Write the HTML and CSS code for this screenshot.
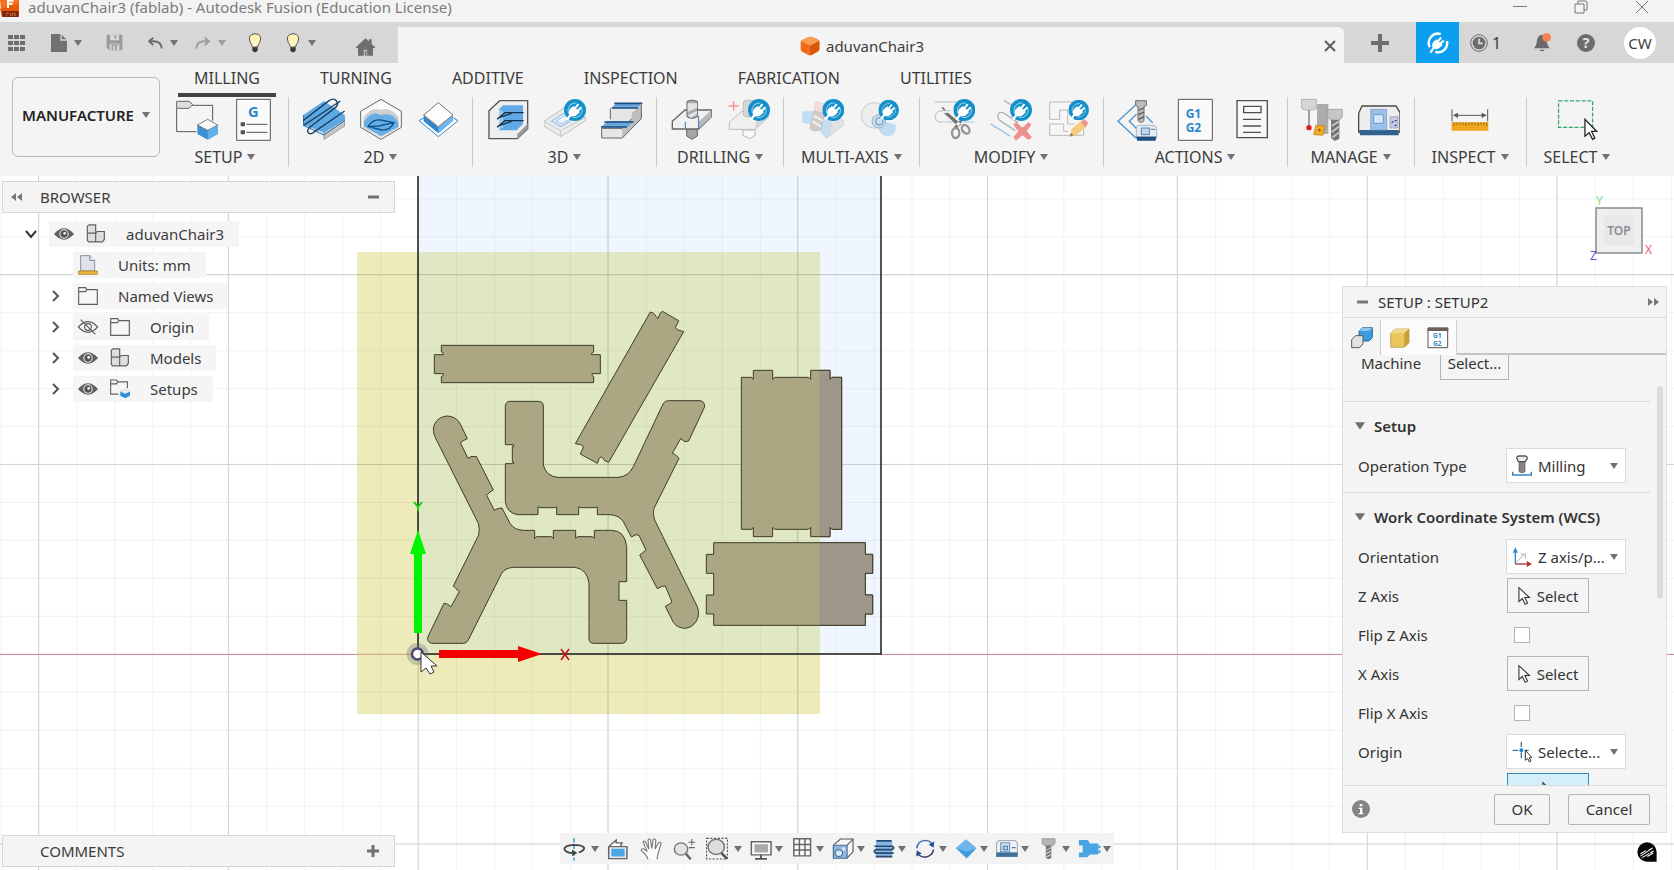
FILE: index.html
```
<!DOCTYPE html>
<html lang="en">
<head>
<meta charset="utf-8">
<title>aduvanChair3 (fablab) - Autodesk Fusion (Education License)</title>
<link rel="stylesheet" href="styles.css">
</head>
<body>
<svg class="defs" aria-hidden="true">
  <defs>
    <symbol id="caret" viewBox="0 0 8 6"><path d="M0 0H8L4 6Z" fill="#717171"/></symbol>
    <symbol id="plug" viewBox="0 0 64 64"><circle cx="32" cy="32" r="32" fill="#1390ca"/><path d="M14 42A21 21 0 0 1 36 12M52 28A21 21 0 0 1 26 53" fill="none" stroke="#8fcbe8" stroke-width="3"/><path d="M6 58 15 46Q11 32 22 25L28 20 46 38 40 44Q31 54 20 50L12 62Z" fill="#fff"/><path d="M33 26 42 15M40 34 51 24" stroke="#fff" stroke-width="6"/></symbol>
    <symbol id="eye" viewBox="0 0 60 40"><path d="M0 20Q30-14 60 20Q30 54 0 20Z" fill="#606060"/><circle cx="30" cy="20" r="14" fill="#f4f4f4"/><circle cx="30" cy="20" r="11" fill="#555"/><circle cx="32" cy="18" r="4" fill="#fff"/></symbol>
    <symbol id="folder" viewBox="0 0 60 54"><path d="M2 14V52H58V8H27L23 2H2V14H22L27 8" fill="#f6f6f6" stroke="#616161" stroke-width="3.5"/></symbol>
    <symbol id="blocks" viewBox="0 0 60 56"><path d="M4 6 9 2H29V27H4ZM4 27H29V53H8L4 49ZM29 27 34 22H55V46L49 53H29Z" fill="#dedede" stroke="#606060" stroke-width="3.5"/></symbol>
    <symbol id="bulb" viewBox="0 0 42 60"><path d="M13 42Q13 36 7 29Q-3 4 21 2Q45 4 35 29Q29 36 29 42Z" fill="#fff3b5" stroke="#55534c" stroke-width="3"/><path d="M16 20V40M21 28V40" stroke="#fffbe2" stroke-width="4"/><path d="M13 43H29V52L24 58H18L13 52Z" fill="#34383c"/></symbol>
    <symbol id="arrow" viewBox="0 0 42 60"><path d="M3 3V48L14 38 23 57 31 53 22 35H37Z" fill="#fff" stroke="#333" stroke-width="3.5"/></symbol>
  </defs>
</svg>

<div class="app">
  <header class="titlebar">
    <svg class="logo" viewBox="0 0 57 54"><path d="M0 0H57V51H6Z" fill="#f5711c"/><path d="M0 26 57 10V51H6Z" fill="#e95a0c"/><path d="M6 33H56V51H8Z" fill="#7c2606"/><path d="M24 24V2H41M24 11H38" stroke="#fff" stroke-width="6" fill="none"/><path d="M20 38V47M20 39H27M31 38V46H37V38M48 39H42V46H49" stroke="#e88b54" stroke-width="2" fill="none"/></svg>
    <span class="title">aduvanChair3 (fablab) - Autodesk Fusion (Education License)</span>
    <div class="window-buttons">
      <button aria-label="Minimize"><svg viewBox="0 0 14 14"><path d="M0 6.500H14" stroke="#777"/></svg></button>
      <button aria-label="Restore"><svg viewBox="0 0 14 14"><path d="M1 4H10V13H1ZM4 4V1H12L13 2V10H10" fill="none" stroke="#777"/></svg></button>
      <button aria-label="Close"><svg viewBox="0 0 14 14"><path d="M1 1 13 13M13 1 1 13" stroke="#777"/></svg></button>
    </div>
  </header>

  <div class="tabbar">
    <div class="quick">
      <button class="q-apps" aria-label="Data panel"><svg width="18" height="18" viewBox="0 0 18 18"><path d="M0 1H5V5H0ZM6 1H11V5H6ZM12 1H17V5H12ZM0 7H5V11H0ZM6 7H11V11H6ZM12 7H17V11H12ZM0 13H5V17H0ZM6 13H11V17H6ZM12 13H17V17H12Z" fill="#6d6d6d"/></svg></button>
      <button class="q-menu" aria-label="File"><svg width="16" height="18" viewBox="0 0 48 54"><path d="M0 0H28V20H48V54H0ZM32 2 46 16H32Z" fill="#717171"/></svg><svg class="caret"><use href="#caret"/></svg></button>
      <button class="q-save" aria-label="Save"><svg width="17" height="17" viewBox="0 0 51 51"><path d="M2 2H49V49H10L2 42Z" fill="#9a9a9a"/><path d="M13 2V18H38V2M12 49V30H39V49" fill="#dadada" stroke="#dadada" stroke-width="2"/><path d="M28 4V14M19 36V49M30 36V49M16 33H36" stroke="#999" stroke-width="5"/></svg></button>
      <div class="q-history">
        <button class="q-menu" aria-label="Undo"><svg width="16" height="14" viewBox="0 0 46 36"><path d="M42 34Q42 14 20 13H8M18 3 6 13 18 24" fill="none" stroke="#6d6d6d" stroke-width="5.5"/></svg><svg class="caret"><use href="#caret"/></svg></button>
        <button class="q-menu faded" aria-label="Redo"><svg width="16" height="14" viewBox="0 0 46 36"><path d="M4 34Q4 14 26 13H38M28 3 40 13 28 24" fill="none" stroke="#6d6d6d" stroke-width="5.5"/></svg><svg class="caret"><use href="#caret"/></svg></button>
      </div>
      <button class="q-tip" aria-label="Tips"><svg width="14" height="20"><use href="#bulb"/></svg></button>
      <button class="q-menu" aria-label="Learning"><svg width="16" height="20"><use href="#bulb"/></svg><svg class="caret"><use href="#caret"/></svg></button>
      <button class="q-home" aria-label="Home"><svg width="19" height="18" viewBox="0 0 56 52"><path d="M0 26 28 0 38 9V3H46V17L56 26V29H50V52H33V34H23V52H6V29H0Z" fill="#6e6e6e"/><path d="M26 37H31V52H26Z" fill="#6e6e6e"/></svg></button>
    </div>
    <div class="doc-tab">
      <svg width="20" height="20" viewBox="0 0 60 60"><path d="M2 18Q2 14 8 11L26 3Q30 1 36 3L52 10Q58 12 58 18V40Q58 44 52 47L36 56Q30 59 24 56L8 48Q2 45 2 40Z" fill="#ef6a1a"/><path d="M2 16 26 3Q30 1 36 3L58 15 31 29Z" fill="#fb9d4f"/><path d="M31 29 58 15V40Q58 44 52 47L36 56 31 58Z" fill="#d95507"/></svg>
      <span>aduvanChair3</span>
      <button class="doc-close" aria-label="Close tab"><svg width="12" height="12" viewBox="0 0 12 12"><path d="M1 1 11 11M11 1 1 11" stroke="#5d5d5d" stroke-width="2"/></svg></button>
    </div>
    <div class="account">
      <button class="a-plus" aria-label="New tab"><svg width="18" height="18" viewBox="0 0 18 18"><path d="M9 0V18M0 9H18" stroke="#6d6d6d" stroke-width="4"/></svg></button>
      <button class="a-ext" aria-label="Extensions"><svg width="22" height="22" viewBox="0 0 64 64"><path d="M8 44A27 27 0 0 1 40 6M58 26A27 27 0 0 1 24 58" fill="none" stroke="#fff" stroke-width="7"/><path d="M7 58 16 46Q12 33 23 25L28 21 45 38 40 43Q31 53 21 49L13 62Z" fill="#fff"/><path d="M33 26 41 16M39 33 49 25" stroke="#fff" stroke-width="6"/></svg></button>
      <button class="a-jobs" aria-label="Job status"><svg width="18" height="18" viewBox="0 0 54 54"><circle cx="27" cy="27" r="25" fill="none" stroke="#6e6e6e" stroke-width="3"/><circle cx="27" cy="27" r="19" fill="#6e6e6e"/><path d="M27 14V28H38" stroke="#ddd" stroke-width="5" fill="none"/></svg><span>1</span></button>
      <button class="a-item" aria-label="Notifications"><svg width="18" height="20" viewBox="0 0 54 60"><path d="M0 46Q8 38 9 22Q12 6 24 5Q36 6 38 24Q40 40 48 46ZM16 50H32Q24 60 16 50Z" fill="#6a6a6a"/><circle cx="38" cy="13" r="13" fill="#f58350"/></svg></button>
      <button class="a-item a-help" aria-label="Help">?</button>
      <button class="avatar">CW</button>
    </div>
  </div>

  <div class="ribbon">
    <button class="workspace-switch">MANUFACTURE<svg class="caret"><use href="#caret"/></svg></button>
    <div class="ribbon-main">
      <nav class="ribbon-tabs">
        <a class="current" href="#milling">MILLING</a><a href="#turning">TURNING</a><a href="#additive">ADDITIVE</a><a href="#inspection">INSPECTION</a><a href="#fabrication">FABRICATION</a><a href="#utilities">UTILITIES</a>
      </nav>
      <div class="groups">
        <section class="group">
          <div class="tools">
            <button aria-label="New setup"><svg viewBox="531 294 126 132"><path d="M575 316H641V362M533 326V395H592" fill="none" stroke="#555" stroke-width="3"/><path d="M533 304H571L581 314 570 325H533Z" fill="#ddd" stroke="#666" stroke-width="3"/><path d="M595 375 626 358 656 375V402L626 419 595 402Z" fill="#3c91d6"/><path d="M595 375 626 358 656 375 626 391Z" fill="#fafafa" stroke="#555" stroke-width="2"/><path d="M626 391 656 375V402L626 419Z" fill="#62aee4"/></svg></button>
            <button aria-label="NC program"><svg viewBox="699 294 126 132"><path d="M710 298H811V421H710Z" fill="#fafafa" stroke="#555" stroke-width="3"/><path d="M739 373H802M739 397H802" stroke="#555" stroke-width="3"/><path d="M722 367H735V379H722ZM722 391H735V403H722Z" fill="#555"/><text class="g-code big" x="744" y="350">G</text></svg></button>
          </div>
          <button class="group-label">SETUP<svg class="caret"><use href="#caret"/></svg></button>
        </section>
        <section class="group">
          <div class="tools">
            <button aria-label="2D adaptive clearing"><svg viewBox="912 294 126 132"><path d="M913 350 975 386V418L913 376Z" fill="#eee"/><path d="M975 386 1037 350V378L975 418Z" fill="#c9c9c9" stroke="#777" stroke-width="2"/><path d="M913 345 975 303 1037 345V360L975 398 913 374Z" fill="#5fa9e3"/><path d="M913 345V376L975 405 1037 362" fill="none" stroke="#2c6ca8" stroke-width="3"/><path d="M912 362 990 302Q1010 290 1016 310Q1015 320 1005 326L934 380Q920 392 930 400Q938 404 948 394L1037 333M914 376 1024 303" fill="none" stroke="#183f63" stroke-width="4"/></svg></button>
            <button aria-label="2D pocket"><svg viewBox="1080 294 126 132"><path d="M1082 334 1143 298 1204 334V382L1143 418 1082 382Z" fill="#fafafa" stroke="#666" stroke-width="3"/><path d="M1090 352Q1116 318 1143 330Q1170 318 1196 352V384L1143 412 1090 384Z" fill="#cfcfcf"/><path d="M1092 378V365Q1115 330 1143 345Q1178 335 1195 368V380L1143 408Z" fill="#65aee6"/><path d="M1104 380Q1118 356 1142 360L1182 368Q1170 392 1146 390ZM1104 380 1136 378 1182 368" fill="none" stroke="#11518c" stroke-width="4"/></svg></button>
            <button aria-label="Face"><svg viewBox="1248 294 126 132"><path d="M1254 362 1276 350H1350L1371 362 1312 410Z" fill="#fff" stroke="#3486c8" stroke-width="3"/><path d="M1268 346 1312 382 1356 346V362L1312 400 1268 364Z" fill="#2f86cd"/><path d="M1312 382 1356 346V362L1312 400Z" fill="#72b6e9"/><path d="M1268 345 1312 308 1356 345 1312 380Z" fill="#fdfdfd" stroke="#777" stroke-width="3"/></svg></button>
          </div>
          <button class="group-label">2D<svg class="caret"><use href="#caret"/></svg></button>
        </section>
        <section class="group">
          <div class="tools">
            <button aria-label="3D adaptive clearing"><svg viewBox="81 114 126 132"><path d="M87 152 119 122H203V206L172 236H87Z" fill="#eee" stroke="#555" stroke-width="4"/><path d="M172 236V222L203 192V206Z" fill="#999"/><path d="M117 147 130 136H189V192L170 211H117Z" fill="#62a8e6"/><path d="M117 147 130 155V202L117 211Z" fill="#9dccf2"/><path d="M111 178 135 158H191M111 202 135 182H191M120 172 155 160M120 196 155 184" fill="none" stroke="#17314c" stroke-width="4"/></svg></button>
            <button aria-label="Pocket clearing"><svg viewBox="252 114 126 132"><g opacity=".6"><path d="M252 184 315 142 376 172V182L302 230 252 198Z" fill="#e8e8e8" stroke="#999" stroke-width="3"/><path d="M252 184 302 212 376 172M302 212V230" fill="none" stroke="#aaa" stroke-width="3"/><path d="M275 183 318 156 348 172 303 200Z" fill="#dcecfb" stroke="#69a6e0" stroke-width="4"/><path d="M288 183 317 166 334 175 304 191Z" fill="#eef6fd" stroke="#69a6e0" stroke-width="3"/></g><use href="#plug" x="312" y="117" width="66" height="66"/></svg></button>
            <button aria-label="Steep and shallow"><svg viewBox="420 114 126 132"><path d="M448 152 460 140H541V176L484 234H422V206L433 194H448Z" fill="#e6e6e6"/><path d="M541 134V176L484 234V205L512 178V160Z" fill="#bdbdbd"/><path d="M448 145V178M541 134V176L484 234H422V205H484L512 176" fill="none" stroke="#666" stroke-width="3"/><path d="M452 143 466 129H544L530 143ZM420 202 440 184H518L500 202Z" fill="#6aa6da"/><path d="M452 144H531M460 130H544M420 201H498M430 186H517" stroke="#174d80" stroke-width="5"/></svg></button>
          </div>
          <button class="group-label">3D<svg class="caret"><use href="#caret"/></svg></button>
        </section>
        <section class="group">
          <div class="tools">
            <button aria-label="Drill"><svg viewBox="630 114 126 132"><path d="M677 204H709V228L693 238 677 228Z" fill="#a5a5a5" stroke="#666" stroke-width="3"/><path d="M634 184 672 150H751V170L713 207H634Z" fill="#f1f1f1" stroke="#666" stroke-width="4"/><path d="M713 207V186L751 150V170Z" fill="#b9b9b9"/><path d="M673 186V206M713 168V206" stroke="#2c75b5" stroke-width="3"/><path d="M678 124Q693 116 709 124V170Q693 180 678 170Z" fill="#aaa" stroke="#666" stroke-width="3"/><path d="M680 130H708V144L680 156ZM680 166 708 152V162L690 174Z" fill="#e3e3e3"/></svg></button>
            <button aria-label="Hole recognition"><svg viewBox="804 114 126 132"><g opacity=".5"><path d="M849 210H885V226L870 236 849 226Z" fill="#fff" stroke="#777" stroke-width="3"/><path d="M808 186 846 154H925V172L887 208H808Z" fill="#eee" stroke="#888" stroke-width="3"/><path d="M887 208V186L925 158V172Z" fill="#bbb"/><path d="M850 124Q866 116 882 124V166Q866 176 850 166Z" fill="#bbb" stroke="#888" stroke-width="3"/></g><path d="M821 123V153M806 138H836" stroke="#f29292" stroke-width="4"/><use href="#plug" x="864" y="117" width="66" height="66"/></svg></button>
          </div>
          <button class="group-label">DRILLING<svg class="caret"><use href="#caret"/></svg></button>
        </section>
        <section class="group">
          <div class="tools">
            <button aria-label="Multi-axis contour"><svg viewBox="1029 114 126 132"><g opacity=".65"><path d="M1029 154H1068L1100 176 1128 170 1155 196 1102 236 1066 196 1029 188Z" fill="#a9d2f2"/><path d="M1118 168 1155 182V194L1112 226Z" fill="#d9d9d9" stroke="#bbb" stroke-width="2"/><path d="M1071 126 1100 134 1088 205Q1070 220 1053 206Z" fill="#bdb6b3" stroke="#a19a97" stroke-width="2"/><path d="M1071 126 1100 134 1096 158 1064 150Z" fill="#f2d2cf"/><path d="M1064 168 1092 182M1060 184 1086 200" stroke="#eee" stroke-width="6"/></g><use href="#plug" x="1090" y="117" width="66" height="66"/></svg></button>
            <button aria-label="Rotary"><svg viewBox="1197 114 126 132"><circle cx="1242" cy="166" r="38" fill="#eee" stroke="#c2cccd" stroke-width="3"/><path d="M1232 166 1262 180 1307 194Q1310 228 1282 228 1262 226 1256 206Z" fill="#bfdcf3"/><circle cx="1256" cy="184" r="20" fill="#c9deee" stroke="#92b4d0" stroke-width="3"/><circle cx="1258" cy="184" r="11" fill="none" stroke="#7ba3c6" stroke-width="4"/><use href="#plug" x="1255" y="119" width="62" height="62"/></svg></button>
          </div>
          <button class="group-label">MULTI-AXIS<svg class="caret"><use href="#caret"/></svg></button>
        </section>
        <section class="group">
          <div class="tools">
            <button aria-label="Trim toolpath"><svg viewBox="105 114 126 132"><path d="M110 126H176M136 186H124Q110 182 112 166 116 152 134 152H158" fill="none" stroke="#b6bcc2" stroke-width="3"/><path d="M140 186H228" stroke="#a5c9ea" stroke-width="3"/><path d="M138 160 150 158 190 192 182 200ZM200 172 178 186 168 202 176 208Z" fill="#77736f"/><path d="M133 142 140 150" stroke="#555" stroke-width="4"/><ellipse cx="203" cy="208" rx="14" ry="10" fill="none" stroke="#98938e" stroke-width="7" transform="rotate(55 203 208)"/><ellipse cx="173" cy="219" rx="11" ry="15" fill="none" stroke="#98938e" stroke-width="7"/><use href="#plug" x="166" y="117" width="66" height="66"/></svg></button>
            <button aria-label="Delete passes"><svg viewBox="276 114 126 132"><path d="M318 122 350 140M360 188 316 158Q302 154 300 166 298 174 306 182L352 212" fill="none" stroke="#aeb6bd" stroke-width="4"/><path d="M278 192 336 228" stroke="#8fbce4" stroke-width="4"/><path d="M346 194 354 186 373 203 392 186 400 194 386 214 402 232 392 240 373 226 354 242 346 232 361 214Z" fill="#eb928f"/><use href="#plug" x="336" y="117" width="66" height="66"/></svg></button>
            <button aria-label="Edit toolpath"><svg viewBox="438 114 126 132"><path d="M446 126H548V226H446Z" fill="#f6f6f6"/><path d="M446 178V126H548V226H446V192H488V214H502M446 178H476V150H500V192H520" fill="none" stroke="#bababa" stroke-width="3"/><path d="M506 230 512 206 540 182 558 198 528 224Z" fill="#f6cb80"/><path d="M540 186 550 178 562 188 554 202Z" fill="#ef9290"/><path d="M506 230 510 218 518 226Z" fill="#8d7d6d"/><use href="#plug" x="502" y="119" width="62" height="62"/></svg></button>
          </div>
          <button class="group-label">MODIFY<svg class="caret"><use href="#caret"/></svg></button>
        </section>
        <section class="group">
          <div class="tools">
            <button aria-label="Simulate with machine"><svg viewBox="663 114 126 132"><path d="M718 136 666 184 720 234M722 162 700 184 722 206M750 168 770 188" fill="none" stroke="#4f93cf" stroke-width="4"/><path d="M719 122H751V136L744 140V182Q735 192 726 182V140L719 136Z" fill="#bdbdbd" stroke="#6b6b6b" stroke-width="3"/><path d="M728 150 744 144M728 164 744 156M728 178 744 170" stroke="#555" stroke-width="4"/><path d="M721 204Q722 196 730 196H774Q782 198 782 206V230H721Z" fill="#e4ebf2" stroke="#8b9db0" stroke-width="2"/><path d="M736 204H760V224H736ZM764 208H778" fill="#c0d6ec" stroke="#5a81ad" stroke-width="3"/><path d="M720 230H782L778 242H724Z" fill="#1d4c80"/></svg></button>
            <button aria-label="Post process"><svg viewBox="822 114 126 132"><path d="M835 118H937V241H835Z" fill="#fafafa" stroke="#555" stroke-width="3"/><text class="g-code" x="857" y="175">G1</text><text class="g-code" x="857" y="217">G2</text></svg></button>
            <button aria-label="Setup sheet"><svg viewBox="993 114 126 132"><path d="M1011 122H1102V233H1011Z" fill="#f8f8f8" stroke="#505050" stroke-width="4"/><path d="M1031 139H1083V158H1031Z" fill="none" stroke="#505050" stroke-width="4"/><path d="M1029 178H1083M1029 198H1083M1029 217H1083" stroke="#505050" stroke-width="4"/></svg></button>
          </div>
          <button class="group-label">ACTIONS<svg class="caret"><use href="#caret"/></svg></button>
        </section>
        <section class="group">
          <div class="tools">
            <button aria-label="Tool library"><svg viewBox="96 294 126 132"><path d="M97 298H142V326L130 330H106L97 324Z" fill="#d5d5d5" stroke="#9a9a9a" stroke-width="2"/><path d="M120 330V376" stroke="#777" stroke-width="4"/><circle cx="120" cy="383" r="8" fill="#e01c1c"/><path d="M144 312H178V402H160L144 376Z" fill="#acacac"/><path d="M140 376 168 378 162 406 134 404Z" fill="#f2a826" stroke="#b77b16" stroke-width="2"/><circle cx="151" cy="390" r="4" fill="#9b6109"/><path d="M176 328H220V350L212 360H184L176 350Z" fill="#c6c6c6" stroke="#8f8f8f" stroke-width="2"/><path d="M186 360H211V416L198 423 186 414Z" fill="#777"/><path d="M188 378 210 364M188 396 210 380M190 412 210 398" stroke="#ccc" stroke-width="5"/></svg></button>
            <button aria-label="Machine library"><svg viewBox="264 294 126 132"><path d="M266 396V340L276 318H378L390 338V396Z" fill="#eee" stroke="#4a4a4a" stroke-width="4"/><path d="M268 390H386V406H270Z" fill="#2e628d"/><path d="M302 328H350V390H302Z" fill="#9bc1ea" stroke="#6d97c6" stroke-width="2"/><path d="M311 344H340V370H311Z" fill="#d6e7f8" stroke="#4d7db1" stroke-width="2"/><path d="M360 350H384V384H360Z" fill="#c4cbe6" stroke="#8c94b5" stroke-width="2"/><path d="M365 366H370M374 362H380M374 376H380" stroke="#324163" stroke-width="4"/></svg></button>
          </div>
          <button class="group-label">MANAGE<svg class="caret"><use href="#caret"/></svg></button>
        </section>
        <section class="group">
          <div class="tools">
            <button aria-label="Measure"><svg viewBox="537 294 126 132"><path d="M546 328V364M653 328V364M553 346H646" stroke="#555" stroke-width="3"/><path d="M549 346 564 338V354ZM650 346 635 338V354Z" fill="#555"/><path d="M545 367H655V392H545Z" fill="#f2a51e"/><path d="M552 367V378M561 367V375M570 367V375M579 367V375M588 367V378M597 367V375M606 367V375M615 367V375M624 367V378M633 367V375M642 367V375M650 367V378" stroke="#7a5208" stroke-width="2"/></svg></button>
          </div>
          <button class="group-label">INSPECT<svg class="caret"><use href="#caret"/></svg></button>
        </section>
        <section class="group">
          <div class="tools">
            <button aria-label="Select"><svg viewBox="849 294 132 132"><path d="M857 300H964V383H857Z" fill="none" stroke="#35a56b" stroke-width="4" stroke-dasharray="13 5"/><path d="M940 358V411L953 400 964 421 971 417 961 396H977Z" fill="#fff" stroke="#222" stroke-width="4"/></svg></button>
          </div>
          <button class="group-label">SELECT<svg class="caret"><use href="#caret"/></svg></button>
        </section>
      </div>
    </div>
  </div>

  <main class="workspace">
    <svg class="scene" viewBox="0 176 1674 694" preserveAspectRatio="xMinYMin slice" role="img" aria-label="Stock and toolpath view">
      <defs>
        <pattern id="minor" x="0.5" y="8.5" width="37.96" height="37.96" patternUnits="userSpaceOnUse"><path d="M.5 0V38M0 .5H38" stroke="#000" stroke-opacity=".05" fill="none"/></pattern>
        <pattern id="major" x="38" y="84.3" width="189.8" height="189.8" patternUnits="userSpaceOnUse"><path d="M.5 0V190M0 .5H190" stroke="#000" stroke-opacity=".15" fill="none"/></pattern>
        <clipPath id="outside"><path d="M1438-400H2000V1400H1438Z"/></clipPath>
        <path id="panelTall" d="M1204 262H1235L1240 268V241H1298V268L1304 262H1406L1412 268V241H1470V268L1476 262H1505V718H1476L1470 712V740H1412V712L1406 718H1304L1298 712V740H1240V712L1235 718H1204Z"/>
        <path id="panelWide" d="M1121 758H1576V793H1598V850H1576V915H1598V972H1576V1006H1121V972H1099V915H1121V850H1099V793H1121Z"/>
      </defs>
      <rect x="0" y="0" width="3000" height="2000" fill="#fff"/>
      <rect x="418" y="100" width="463" height="554" fill="#eff6fe"/>
      <path d="M357 252H820V714H357Z" fill="#ecebb9"/>
      <path d="M418 252H820V654H418Z" fill="#dfe8c2"/>
      <rect x="0" y="0" width="3000" height="2000" fill="url(#minor)"/>
      <rect x="0" y="0" width="3000" height="2000" fill="url(#major)"/>
      <path d="M0 654.500H357M881 654.500H3000" stroke="#d08d98"/>
      <path d="M357 654.500H418" stroke="#d9a77f"/>
      <path d="M418 100V654H881V100" fill="none" stroke="#1e1f1c" stroke-width="1.500"/>
      <g class="parts" transform="translate(340 290) scale(.33333)">
        <path d="M304 166H761V186L755 189V194H781V251H756V256L761 260V278H304V260L310 256V251H283V194H310V189L304 186Z"/>
        <path d="M706 461 931 66 941 70 954 86 960 70 967 64 1016 92 1006 113 1014 120 1031 125 806 517 794 512 785 500 778 505 772 520 721 492 731 470 722 464Z"/>
        <path d="M496 348Q498 334 510 334H596Q609 334 610 348V525Q618 558 652 562H835Q865 560 880 530L970 340Q975 332 985 332H1080Q1094 334 1094 350L1046 453 1035 455 1022 446 997 490 1006 494 1017 505 942 655Q937 670 944 690L1072 950Q1081 975 1068 995 1055 1014 1034 1015 1012 1014 1000 997L976 949 985 944 996 936 976 888 966 889 952 896 899 795 908 788 918 780 897 736 888 734 874 741 850 695Q838 676 810 674H772V651L766 653H722L716 650V674H650V651L644 653H600L594 650V674H532Q500 668 496 635V521H521V516H517V469H521V464H496Z"/>
        <path d="M288 447Q274 420 285 400 298 379 322 378 347 379 360 400L382 446 370 452 361 458 384 505 393 500 409 499 460 600 450 606 440 616 463 661 472 656 486 654 510 700Q522 720 550 721H584V745L590 740H634L640 745V721H707V745L713 740H757L763 745V721H815Q855 722 860 770V875H837V931H860V1045Q858 1060 845 1060H762Q748 1060 747 1048V880Q742 838 705 832H520Q495 834 485 850L385 1050Q380 1060 370 1060H275Q262 1058 263 1042L312 940 322 942 333 950 358 905 348 896 340 888 416 735Q420 720 415 700Z"/>
        <use href="#panelTall"/><use href="#panelWide"/>
        <g class="overhang" clip-path="url(#outside)"><use href="#panelTall"/><use href="#panelWide"/></g>
      </g>
      <path d="M414 633V554H410L418 530 426 554H422V633Z" fill="#00f400"/>
      <path d="M414 502 418 507 422 502M418 507V511" fill="none" stroke="#12d212" stroke-width="2"/>
      <path d="M439 650H518V646L542 654 518 662V658H439Z" fill="#f40000"/>
      <path d="M561 649 569 660M569 649 561 660" stroke="#c31212" stroke-width="1.500"/>
      <circle cx="417.500" cy="654" r="11" fill="#666" fill-opacity=".3"/>
      <circle cx="417.500" cy="654" r="5.500" fill="#fff" stroke="#4a4877" stroke-width="2.500"/>
      <path d="M421 652V672L426 668 430 674 434 672 431 666H437Z" fill="#fff" stroke="#333"/>
    </svg>

    <section class="browser">
      <div class="bar"><svg width="11" height="8" viewBox="0 0 11 8"><path d="M5 0V8L0 4ZM11 0V8L6 4Z" fill="#777"/></svg><h2>BROWSER</h2><button aria-label="Collapse"><svg width="12" height="12" viewBox="0 0 12 12"><path d="M1 6H12" stroke="#707070" stroke-width="3"/></svg></button></div>
      <ul class="tree">
        <li class="root"><button class="twist" aria-label="Collapse aduvanChair3"><svg width="12" height="12" viewBox="0 0 12 12"><path d="M1 3 6 9 11 3" fill="none" stroke="#333" stroke-width="2"/></svg></button><span class="node"><svg width="20" height="14"><use href="#eye"/></svg><svg width="20" height="19"><use href="#blocks"/></svg><span>aduvanChair3</span></span></li>
        <li><span class="twist"></span><span class="node"><svg width="20" height="20" viewBox="0 0 60 60"><path d="M8 2H36L50 16V48H8Z" fill="#dfe2ea" stroke="#8d909c" stroke-width="3"/><path d="M36 2V16H50" fill="#fff" stroke="#777" stroke-width="3"/><path d="M2 48H58V58H2Z" fill="#eeb53d" stroke="#9d7214" stroke-width="2"/></svg><span>Units: mm</span></span></li>
        <li><button class="twist" aria-label="Expand Named Views"><svg width="12" height="12" viewBox="0 0 12 12"><path d="M4 1 9 6 4 11" fill="none" stroke="#555" stroke-width="2"/></svg></button><span class="node"><svg width="20" height="18"><use href="#folder"/></svg><span>Named Views</span></span></li>
        <li><button class="twist" aria-label="Expand Origin"><svg width="12" height="12" viewBox="0 0 12 12"><path d="M4 1 9 6 4 11" fill="none" stroke="#555" stroke-width="2"/></svg></button><span class="node"><svg width="20" height="16" viewBox="0 0 60 48"><path d="M1 24Q30-8 59 24Q30 56 1 24ZM8 2 52 46" fill="none" stroke="#5d5d5d" stroke-width="3.500"/><circle cx="30" cy="24" r="10" fill="none" stroke="#5d5d5d" stroke-width="3.500"/></svg><svg width="20" height="18"><use href="#folder"/></svg><span>Origin</span></span></li>
        <li><button class="twist" aria-label="Expand Models"><svg width="12" height="12" viewBox="0 0 12 12"><path d="M4 1 9 6 4 11" fill="none" stroke="#555" stroke-width="2"/></svg></button><span class="node"><svg width="20" height="14"><use href="#eye"/></svg><svg width="20" height="19"><use href="#blocks"/></svg><span>Models</span></span></li>
        <li><button class="twist" aria-label="Expand Setups"><svg width="12" height="12" viewBox="0 0 12 12"><path d="M4 1 9 6 4 11" fill="none" stroke="#555" stroke-width="2"/></svg></button><span class="node"><svg width="20" height="14"><use href="#eye"/></svg><svg width="20" height="20" viewBox="0 0 62 60"><path d="M26 46H2V2H20L24 8H54V28M2 14H20L24 8" fill="none" stroke="#616161" stroke-width="3.500"/><path d="M32 38 47 30 62 38V51L47 59 32 51Z" fill="#2f8fdc"/><path d="M32 38 47 30 62 38 47 45Z" fill="#eee"/></svg><span>Setups</span></span></li>
      </ul>
    </section>

    <section class="comments bar"><h2>COMMENTS</h2><button aria-label="Add comment"><svg width="12" height="12" viewBox="0 0 12 12"><path d="M0 6H12M6 0V12" stroke="#707070" stroke-width="3"/></svg></button></section>

    <svg class="cube" width="76" height="70" viewBox="0 0 76 70"><path d="M14 15H60V60H14Z" fill="#efefef" stroke="#8b8b8b" stroke-width="1.500"/><path d="M22 22H52V52H22Z" fill="#e8e8e8"/><text class="cube-face" x="37" y="42">TOP</text><text x="14" y="12" fill="#7fe08c">Y</text><text x="63" y="61" fill="#ee5b6b">X</text><text x="8" y="67" fill="#5b4fe0">Z</text></svg>

    <nav class="navbar" aria-label="Navigation">
      <button class="wide" aria-label="Orbit"><svg preserveAspectRatio="none" viewBox="26 51 70 70"><path d="M61 54V120" stroke="#3c9cc6" stroke-width="4" stroke-dasharray="14 5"/><path d="M74 96Q90 90 88 82 82 74 60 74 36 76 35 86 38 98 60 98" fill="none" stroke="#444" stroke-width="5"/><path d="M56 88 70 97 56 107Z" fill="#444"/></svg><svg class="caret"><use href="#caret"/></svg></button>
      <button aria-label="Look at"><svg preserveAspectRatio="none" viewBox="148 51 70 70"><path d="M158 79H207V114H158Z" fill="#eee" stroke="#666" stroke-width="4"/><path d="M165 85H201V108H165Z" fill="#4da6e6"/><path d="M160 77 178 60V68H194L190 77" fill="#fff" stroke="#666" stroke-width="4"/></svg></button>
      <button aria-label="Pan"><svg preserveAspectRatio="none" viewBox="239 51 70 70"><path d="M266 116Q262 102 249 92 245 86 252 85L263 92 253 66Q254 60 259 65L268 86 266 60Q269 54 273 60L276 84 280 58Q284 54 287 60L285 86 294 68Q300 64 301 70L292 104 290 116" fill="#fcfcfc" stroke="#777" stroke-width="3"/></svg></button>
      <button aria-label="Zoom"><svg preserveAspectRatio="none" viewBox="331 51 70 70"><circle cx="358" cy="86" r="18" fill="#e4e4e4" stroke="#777" stroke-width="4"/><path d="M371 100 384 116" stroke="#666" stroke-width="7"/><path d="M378 66H396M387 57V75M379 82H395" stroke="#666" stroke-width="3"/></svg></button>
      <button class="wide" aria-label="Fit"><svg preserveAspectRatio="none" viewBox="424 51 70 70"><path d="M431 55H487V115H431Z" fill="none" stroke="#555" stroke-width="3" stroke-dasharray="6 4"/><circle cx="457" cy="80" r="22" fill="#dedede" stroke="#777" stroke-width="4"/><path d="M471 98 486 114" stroke="#555" stroke-width="7"/></svg><svg class="caret"><use href="#caret"/></svg></button>
      <button aria-label="Display settings"><svg preserveAspectRatio="none" viewBox="543 51 70 70"><path d="M552 65H605V103H552Z" fill="#fafafa" stroke="#666" stroke-width="4"/><path d="M560 72H597V96H560Z" fill="#aaa"/><path d="M578 103V114M562 115H594" stroke="#555" stroke-width="5"/></svg><svg class="caret"><use href="#caret"/></svg></button>
      <button aria-label="Grid and snaps"><svg preserveAspectRatio="none" viewBox="647 51 70 70"><path d="M660 56H705V106H660ZM675 56V106M690 56V106M660 73H705M660 89H705" fill="#fafafa" stroke="#666" stroke-width="4"/></svg><svg class="caret"><use href="#caret"/></svg></button>
      <button aria-label="Viewports"><svg preserveAspectRatio="none" viewBox="762 51 70 70"><path d="M772 74 790 57H824V94L808 112" fill="#f7f7f7" stroke="#555" stroke-width="3"/><path d="M771 75H808V113H771Z" fill="#8db9e0" stroke="#4b6b8c" stroke-width="3"/><path d="M808 75 824 57" stroke="#555" stroke-width="3"/><circle cx="786" cy="98" r="10" fill="#d9e9f6" stroke="#44668a" stroke-width="3"/><circle cx="799" cy="86" r="5" fill="#d9e9f6"/></svg><svg class="caret"><use href="#caret"/></svg></button>
      <button aria-label="Toolpath passes"><svg preserveAspectRatio="none" viewBox="871 51 70 70"><path d="M884 60H928V109H884Z" fill="#86b6e2"/><path d="M886 62H926M880 78H928Q936 82 928 88H884Q876 92 884 98H932M884 108H928" fill="none" stroke="#27476c" stroke-width="5"/></svg><svg class="caret"><use href="#caret"/></svg></button>
      <button aria-label="Regenerate"><svg preserveAspectRatio="none" viewBox="981 51 70 70"><path d="M994 84Q996 62 1018 61 1028 62 1034 70" fill="none" stroke="#4168aa" stroke-width="4"/><path d="M1041 64 1039 82 1026 73ZM992 108 994 90 1007 99Z" fill="#244a98"/><path d="M1039 88Q1036 108 1016 110 1006 110 998 102" fill="none" stroke="#33415f" stroke-width="4"/></svg><svg class="caret"><use href="#caret"/></svg></button>
      <button aria-label="Stock"><svg preserveAspectRatio="none" viewBox="1091 51 70 70"><path d="M1099 84 1126 58 1154 84 1128 114Z" fill="#3f9ade"/><path d="M1099 84 1126 58 1154 84 1128 94Z" fill="#6db6ec"/></svg><svg class="caret"><use href="#caret"/></svg></button>
      <button aria-label="Machine"><svg preserveAspectRatio="none" viewBox="1202 51 70 70"><path d="M1209 98V68L1215 61H1259L1265 68V98Z" fill="#eef1f4" stroke="#a3abb3" stroke-width="3"/><path d="M1220 68H1244V94H1220Z" fill="#c8dbef" stroke="#6f93bb" stroke-width="3"/><path d="M1228 78H1238V88H1228ZM1250 82H1260" fill="none" stroke="#4f79a8" stroke-width="3"/><path d="M1208 96H1266V109H1208Z" fill="#3c709d"/></svg><svg class="caret"><use href="#caret"/></svg></button>
      <button aria-label="Tool"><svg preserveAspectRatio="none" viewBox="1308 51 70 70"><path d="M1327 56H1362V70L1356 76H1333L1327 70Z" fill="#b5b5b5" stroke="#8c8c8c" stroke-width="2"/><path d="M1337 76H1352V112L1344 116 1337 112Z" fill="#777"/><path d="M1338 90 1351 82M1338 100 1351 92M1338 110 1351 102" stroke="#d0d0d0" stroke-width="3"/></svg><svg class="caret"><use href="#caret"/></svg></button>
      <button aria-label="Fixture"><svg preserveAspectRatio="none" viewBox="1420 51 70 70"><path d="M1428 60H1452L1458 70H1480V102H1458L1450 110H1428V96H1438V76H1428Z" fill="#4aa3e3"/><path d="M1480 76H1486V84H1480ZM1480 90H1486V98H1480Z" fill="#4aa3e3"/></svg><svg class="caret"><use href="#caret"/></svg></button>
    </nav>

    <form class="setup" onsubmit="return false">
      <div class="setup-head"><svg width="11" height="12" viewBox="0 0 11 12"><path d="M0 6H11" stroke="#777" stroke-width="3"/></svg><h2>SETUP : SETUP2</h2><svg width="11" height="8" viewBox="0 0 11 8"><path d="M0 0V8L5 4ZM6 0V8L11 4Z" fill="#777"/></svg></div>
      <div class="setup-tabs">
        <button class="on" aria-label="Setup"><svg width="22" height="22" viewBox="0 0 66 66"><path d="M24 12 34 2H64V32L54 42H24Z" fill="#3d9be0" stroke="#2a6d9f" stroke-width="3"/><path d="M24 12 34 2H64L54 12Z" fill="#8dc8f2"/><path d="M2 38 14 26H36V50L26 62H2Z" fill="#e2e2e2" stroke="#5b5b5b" stroke-width="3"/></svg></button><button aria-label="Stock"><svg width="20" height="20" viewBox="0 0 60 60"><path d="M2 16 16 3H57V44L43 58H2Z" fill="#e9c55d" stroke="#b08d2c" stroke-width="2"/><path d="M2 16 16 3H57L43 16Z" fill="#f3da8b"/><path d="M43 16 57 3V44L43 58Z" fill="#c99f32"/></svg></button><button class="last" aria-label="Post process"><svg width="22" height="22" viewBox="0 0 66 66"><path d="M3 3H62V62H3Z" fill="#fff" stroke="#555" stroke-width="3"/><path d="M2 2H64V12H2Z" fill="#6f5f5c"/><text class="g-code small" x="18" y="34">G1</text><text class="g-code small" x="18" y="56">G2</text></svg></button>
      </div>
      <div class="setup-body">
        <div class="row machine"><span id="machine-label">Machine</span><button aria-describedby="machine-label">Select...</button></div>
        <section>
          <h3><svg width="10" height="8"><use href="#caret"/></svg>Setup</h3>
          <div class="row"><label for="op">Operation Type</label><div class="pick"><svg viewBox="0 0 60 66"><path d="M14 8Q15 3 22 3H40Q46 4 46 10L40 20H19Z" fill="#eee" stroke="#555" stroke-width="4"/><path d="M21 22H39V50L30 54 21 50Z" fill="#8c8480" stroke="#555" stroke-width="2"/><path d="M2 50V60H58V50" fill="none" stroke="#3786c8" stroke-width="5"/></svg><select id="op"><option>Milling</option></select><svg class="caret"><use href="#caret"/></svg></div></div>
        </section>
        <section>
          <h3><svg width="10" height="8"><use href="#caret"/></svg>Work Coordinate System (WCS)</h3>
          <div class="row"><label for="orient">Orientation</label><div class="pick"><svg viewBox="0 0 60 66"><path d="M10 54V14" stroke="#2f8cd0" stroke-width="4"/><path d="M2 20 10 4 18 20Z" fill="#2f8cd0"/><path d="M12 50 36 26M26 24H40V38" fill="none" stroke="#aaa" stroke-width="3"/><path d="M10 54H44" stroke="#b03131" stroke-width="4"/><path d="M44 45 60 54 44 63Z" fill="#b03131"/></svg><select id="orient"><option>Z axis/p...</option></select><svg class="caret"><use href="#caret"/></svg></div></div>
          <div class="row"><span id="z-label">Z Axis</span><button class="choose" aria-describedby="z-label"><svg><use href="#arrow"/></svg>Select</button></div>
          <div class="row"><label for="flipz">Flip Z Axis</label><input id="flipz" type="checkbox"></div>
          <div class="row"><span id="x-label">X Axis</span><button class="choose" aria-describedby="x-label"><svg><use href="#arrow"/></svg>Select</button></div>
          <div class="row"><label for="flipx">Flip X Axis</label><input id="flipx" type="checkbox"></div>
          <div class="row"><label for="origin">Origin</label><div class="pick"><svg viewBox="0 0 60 66"><path d="M28 2V18M28 34V52M2 28H18M38 28H50" stroke="#4a6f92" stroke-width="4"/><circle cx="28" cy="28" r="6" fill="#1a85cf"/><path d="M40 28V58L47 52 52 63 57 60 52 50H60Z" fill="#fff" stroke="#333" stroke-width="3"/></svg><select id="origin"><option>Selecte...</option></select><svg class="caret"><use href="#caret"/></svg></div></div>
          <div class="row"><span></span><button class="choose active" aria-label="Origin point"><svg><use href="#arrow"/></svg></button></div>
        </section>
        <span class="thumb"></span>
      </div>
      <div class="setup-foot"><svg width="18" height="18" viewBox="0 0 54 54"><circle cx="27" cy="27" r="27" fill="#848484"/><path d="M23 12H31V19H23ZM20 23H31V39H34V43H20V39H24V27H20Z" fill="#fff"/></svg><button class="ok">OK</button><button class="cancel">Cancel</button></div>
    </form>

    <svg class="badge" width="20" height="20" viewBox="0 0 58 58"><path d="M29 1A28 28 0 1 0 29 57H57V29A28 28 0 0 0 29 1Z" fill="#070707"/><path d="M10 34 26 25M10 41 42 20M14 46 36 33M34 24 46 17M30 42 47 32M38 32 48 26" fill="none" stroke="#fff" stroke-width="3"/></svg>
  </main>
</div>
</body>
</html>
```
FILE: styles.css
```
* { box-sizing: border-box; }
html, body { height: 100%; margin: 0; }
body {
  font-family: "Noto Sans", "Open Sans", sans-serif;
  font-size: 15px;
  color: #3c3c3c;
  background: #fff;
}
button {
  font: inherit;
  color: inherit;
  border: 0;
  padding: 0;
  background: none;
  display: flex;
  align-items: center;
  justify-content: center;
}
h2, h3, ul { margin: 0; padding: 0; font-weight: 400; }
svg { display: block; flex: none; }
.defs { position: absolute; width: 0; height: 0; }
.caret { width: 8px; height: 6px; }
.app { display: flex; flex-direction: column; height: 100vh; min-height: 600px; overflow: hidden; }

.titlebar { display: flex; align-items: flex-start; height: 22px; background: #f3f3f3; }
.logo { width: 19px; height: 18px; }
.title { flex: 1; margin-left: 9px; line-height: 15px; font-size: 15px; color: #7b7b7b; white-space: nowrap; }
.window-buttons { display: flex; padding-right: 2px; }
.window-buttons button { width: 61px; height: 14px; }
.window-buttons svg { width: 14px; height: 14px; }

.tabbar { display: flex; height: 41px; background: #d7d7d7; }
.quick { display: flex; width: 398px; gap: 9px; align-items: center; }
.quick button { height: 36px; }
.q-apps { width: 34px; }
.q-menu { width: 46px; gap: 7px; }
.q-save { width: 32px; }
.q-history { display: flex; gap: 2px; }
.q-tip { width: 26px; }
.quick .q-home { flex: 1; padding-top: 8px; }
.faded { opacity: .55; }
.doc-tab {
  flex: 1;
  display: flex;
  align-items: center;
  justify-content: center;
  gap: 6px;
  margin-top: 5px;
  padding: 2px 18px 0 0;
  position: relative;
  background: #f4f4f4;
  border-radius: 0 6px 0 0;
}
.doc-close { position: absolute; right: 6px; width: 16px; height: 20px; }
.account { display: flex; align-items: center; width: 330px; }
.a-plus { width: 72px; }
.account .a-ext { width: 43px; height: 41px; background: #0c9ff0; }
.a-jobs { width: 62px; gap: 4px; justify-content: flex-start; padding-left: 11px; font-size: 16px; }
.a-item { width: 44px; }
.account .a-help { width: 18px; height: 18px; margin: 0 29px 0 12px; border-radius: 50%; background: #6c6c6c; color: #e5e5e5; font-size: 14px; font-weight: 700; }
.avatar { width: 32px; height: 32px; border-radius: 50%; background: #fff; }

.ribbon { display: flex; height: 113px; background: #f4f4f4; color: #3c3c3c; font-size: 16px; }
.workspace-switch {
  width: 148px;
  height: 80px;
  margin: 14px 0 0 12px;
  padding-bottom: 4px;
  gap: 8px;
  border: 1px solid #b9b9b9;
  border-radius: 6px;
  font-size: 15px;
  font-weight: 600;
  color: #222;
}
.ribbon-main { flex: 1; display: flex; flex-direction: column; }
.ribbon-tabs { display: flex; gap: 28px; padding-left: 18px; height: 34px; }
.ribbon-tabs a { padding: 4px 16px 0; line-height: 22px; color: inherit; text-decoration: none; }
.ribbon-tabs .current { border-bottom: 4px solid #444; }
.groups { display: flex; padding-left: 2px; }
.group { display: flex; flex-direction: column; align-items: center; padding: 1px 6px 0; height: 70px; border-right: 1px solid #c9c9c9; }
.group:last-child { border: 0; }
.tools { display: flex; }
.tools button { width: 57px; height: 48px; align-items: flex-start; }
.tools svg { width: 42px; height: 44px; }
.group-label { gap: 5px; height: 26px; padding: 0 11px; line-height: 22px; }
.g-code { font: 700 36px "Noto Sans", sans-serif; fill: #2b87cd; }
.g-code.big { font-size: 44px; }
.g-code.small { font-size: 20px; }

.workspace { flex: 1; position: relative; overflow: hidden; }
.scene { position: absolute; width: 100%; height: 100%; }
.parts path, .parts use { fill: #aba783; stroke: #3d3c27; stroke-width: 3; }
.parts .overhang use { fill: #9e968b; }

.bar { display: flex; align-items: center; height: 32px; padding: 0 15px 0 8px; background: #f4f4f4; border: 1px solid #d6d6d6; }
.bar h2 { flex: 1; margin-left: 18px; font-size: 15px; }
.browser { position: absolute; left: 2px; top: 5px; width: 393px; }
.comments { position: absolute; left: 2px; bottom: 3px; width: 393px; }
.comments h2 { margin-left: 29px; }
.tree { list-style: none; padding: 5px 0 0 43px; }
.tree li { display: flex; height: 31px; align-items: center; }
.tree .root { margin-left: -24px; }
.twist { width: 20px; height: 20px; margin-right: 8px; }
.node { display: flex; align-items: center; gap: 12px; height: 26px; padding: 0 15px 0 5px; background: #f5f5f5; }
.node > span { margin-left: 8px; }

.cube { position: absolute; right: 16px; top: 17px; font: 12px "Noto Sans", sans-serif; }
.cube-face { text-anchor: middle; font-weight: 600; fill: #8a8d90; }

.navbar { position: absolute; left: 50%; bottom: 6px; transform: translateX(-50%); display: flex; align-items: center; gap: 5px; height: 31px; padding: 0 3px 0 0; background: #f3f3f3; }
.navbar button > svg:first-child { width: 26px; height: 24px; margin: 0 1px; }
.navbar .wide { gap: 3px; }

.setup { position: absolute; right: 7px; top: 110px; width: 325px; height: 547px; max-height: calc(100% - 120px); display: flex; flex-direction: column; background: #f4f4f4; border: 1px solid #dedede; color: #333; }
.setup-head { display: flex; align-items: center; height: 31px; padding: 0 7px 0 14px; border-bottom: 1px solid #dcdcdc; }
.setup-head h2 { flex: 1; margin-left: 10px; font-size: 15px; }
.setup-tabs { display: flex; height: 37px; padding-top: 2px; border-bottom: 2px solid #c4c4c4; }
.setup-tabs button { width: 38px; height: 35px; background: #fbfbfb; }
.setup-tabs .on { border-right: 1px solid #ccc; background: #f4f4f4; }
.setup-tabs .last { border-right: 1px solid #ccc; }
.setup-body { flex: 1; position: relative; overflow: hidden; }
.setup-body section { margin-right: 16px; padding-bottom: 7px; border-top: 1px solid #d9d9d9; }
.setup-body h3 { display: flex; align-items: center; gap: 9px; height: 44px; padding: 3px 0 0 12px; font-size: 15px; font-weight: 600; }
.row { display: flex; align-items: center; height: 39px; padding-left: 15px; }
.row > :first-child { width: 148px; }
.row.machine { margin: -12px 0 19px; padding-left: 18px; }
.row.machine > :first-child { width: 79px; }
.row button { height: 35px; border: 1px solid #b4b4b4; }
.row.machine button { width: 69px; }
.row .choose { width: 82px; gap: 6px; margin-left: 1px; }
.choose svg { width: 13px; height: 20px; }
.row .active { background: #d5effa; border-color: #2d8fb5; }
.pick { position: relative; width: 120px; }
.pick > svg:first-child { position: absolute; left: 6px; top: 7px; width: 20px; height: 22px; }
.pick .caret { position: absolute; right: 8px; top: 15px; pointer-events: none; }
.pick select { appearance: none; width: 120px; height: 35px; padding: 0 0 0 31px; border: 1px solid #dadada; border-radius: 0; background: #fff; font: inherit; color: inherit; }
.row input { appearance: none; width: 16px; height: 16px; margin: 0 0 0 8px; border: 1px solid #b5b5b5; background: #fff; }
.thumb { position: absolute; right: 3px; top: 31px; width: 6px; height: 213px; border-radius: 3px; background: #dcdcdc; }
.setup-foot { display: flex; align-items: center; height: 47px; padding: 0 16px 0 9px; border-top: 1px solid #dcdcdc; }
.setup-foot svg { margin-right: auto; }
.setup-foot button { height: 31px; border: 1px solid #b4b4b4; border-radius: 2px; }
.setup-foot .ok { width: 56px; margin-right: 18px; }
.setup-foot .cancel { width: 82px; }
.badge { position: absolute; right: 17px; bottom: 8px; }
```
